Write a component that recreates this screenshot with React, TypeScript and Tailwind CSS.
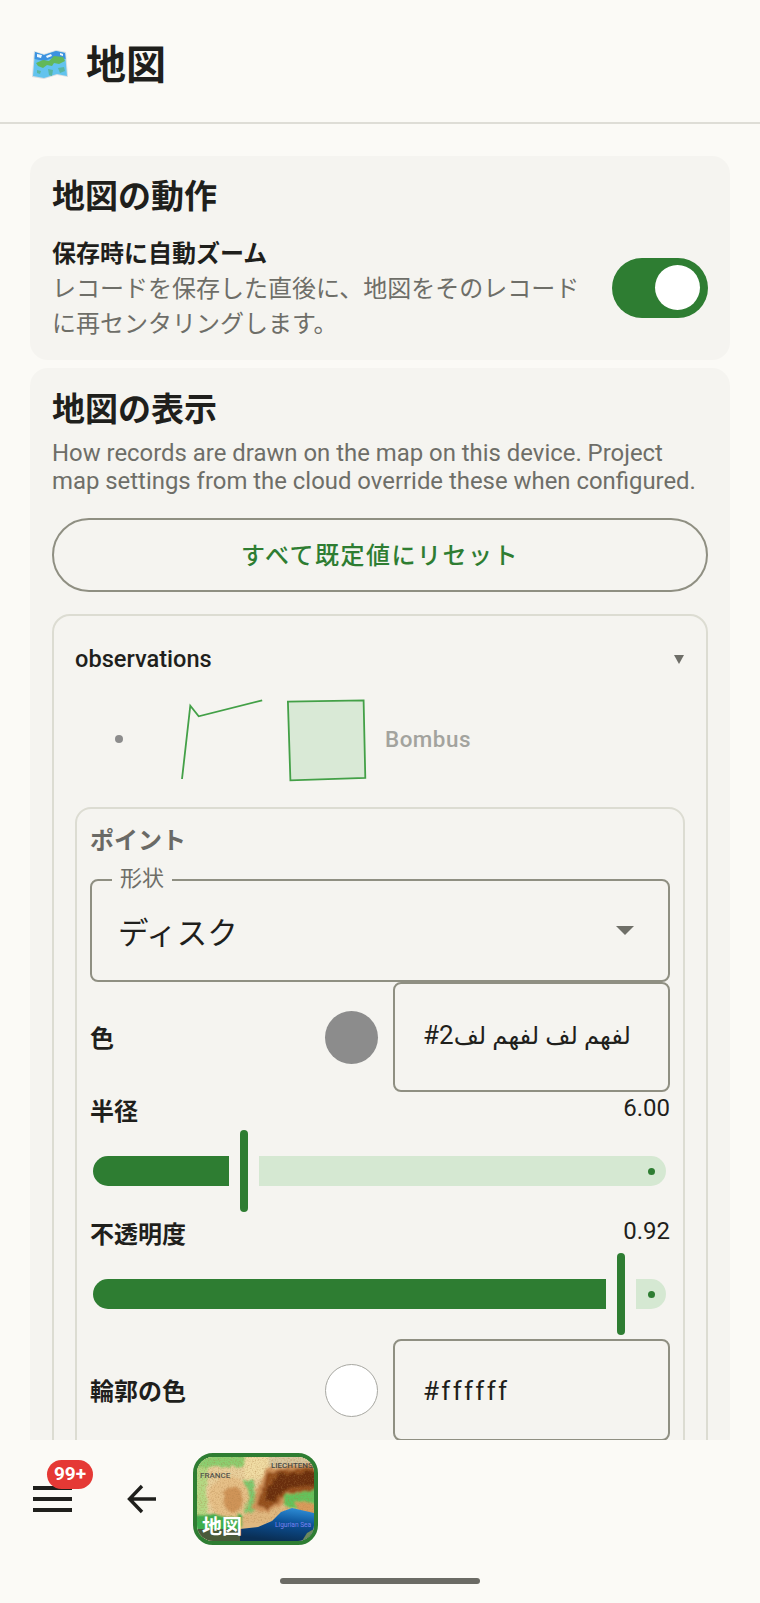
import { ReactNode } from 'react';

const fontStack = "font-['Roboto','Noto_Sans_CJK_JP',sans-serif]";

function Swatch({ color }: { color: string }) {
  return <div className={`size-[53px] shrink-0 rounded-full ${color}`} />;
}

function ColorRow({
  label,
  swatch,
  height,
  children,
}: {
  label: string;
  swatch: string;
  height: string;
  children: ReactNode;
}) {
  return (
    <div className="flex items-center">
      <span className="pt-[3px] text-[24px] leading-[34px] font-bold text-[#1f1f1c]">
        {label}
      </span>
      <div className="ml-auto mr-[15px]">
        <Swatch color={swatch} />
      </div>
      <div
        className={`flex w-[277px] items-center rounded-[8px] border-2 border-[#8f8f82] pl-[28px] text-[26px] text-[#1f1f1c] ${height}`}
      >
        {children}
      </div>
    </div>
  );
}

function SliderRow({
  label,
  value,
  activeWidth,
}: {
  label: string;
  value: string;
  activeWidth: string;
}) {
  return (
    <div>
      <div className="flex items-start justify-between">
        <span className="pt-[3px] text-[24px] leading-[34px] font-bold text-[#1f1f1c]">
          {label}
        </span>
        <span className="pt-[1px] text-[24px] leading-[30px] text-[#1f1f1c]">{value}</span>
      </div>
      <div className="mt-[1px] flex h-[82px] items-center pl-[3px] pr-[4px]">
        <div
          className={`h-[30px] shrink-0 rounded-l-full rounded-r-[3px] bg-[#2e7d32] ${activeWidth}`}
        />
        <div className="ml-[11px] h-[82px] w-[8px] shrink-0 rounded-full bg-[#2e7d32]" />
        <div className="ml-[11px] flex h-[30px] flex-1 items-center justify-end rounded-l-[3px] rounded-r-full bg-[#d5e8d2] pr-[11px]">
          <div className="size-[7px] rounded-full bg-[#2e7d32]" />
        </div>
      </div>
    </div>
  );
}

function MapEmoji() {
  return (
    <svg width="38" height="31" viewBox="0 0 38 31" className="mb-[4px] shrink-0">
      <polygon points="3,2 13,5 25,1 35,3 37,28 26,26 13,30 1,28" fill="#d5dde2" />
      <polygon points="4,3 13,6 25,2 34,4 36,27 26,25 13,29 2,27" fill="#62c3ee" />
      <polygon points="4,3 13,6 25,2 34,4 34.6,10 25,8 13,12 3.6,10" fill="#3c92e0" />
      <path d="M5 14l7-3 6 1 5-5 9 1 2 4-6 3-5-1-2 3-5-1-4 3-5-2z" fill="#62b85a" />
      <path d="M17 20l5 1-1 6-3-1zM27 19l6-1 1 4-5 2zM6 21l4 1-1 3-3-1z" fill="#58b6a0" />
      <path d="M6 5l5 1-1 3-4-1zM15 7l5-2 1 2-5 2zM29 4l3 1v2l-3-1z" fill="#eef8fd" />
    </svg>
  );
}

function TerrainMap() {
  return (
    <svg viewBox="0 0 117 84" preserveAspectRatio="none" className="size-full">
      <defs>
        <filter id="rugged" x="-10%" y="-10%" width="120%" height="120%">
          <feTurbulence type="fractalNoise" baseFrequency="0.16" numOctaves="3" seed="4" result="n" />
          <feDisplacementMap in="SourceGraphic" in2="n" scale="6" />
          <feGaussianBlur stdDeviation="1" />
        </filter>
        <filter id="grain" x="0" y="0" width="100%" height="100%">
          <feTurbulence type="fractalNoise" baseFrequency="0.7" numOctaves="2" seed="11" />
          <feColorMatrix values="0 0 0 0 0.4 0 0 0 0 0.2 0 0 0 0 0.06 0 0 0 2.2 -1" />
          <feComposite in2="SourceGraphic" operator="in" />
        </filter>
        <linearGradient id="sea" x1="0.8" y1="0" x2="0.55" y2="1">
          <stop offset="0" stopColor="#2f8fd8" />
          <stop offset="0.45" stopColor="#0c5198" />
          <stop offset="1" stopColor="#0a2f55" />
        </linearGradient>
      </defs>
      <rect width="117" height="84" fill="#e8cf9c" />
      <g filter="url(#rugged)">
        <rect x="-6" y="-6" width="60" height="16" fill="#8ccf70" />
        <rect x="-6" y="10" width="16" height="50" fill="#b4d984" />
        <rect x="-6" y="58" width="54" height="18" fill="#3eae4e" />
        <polygon points="48,-6 74,-6 74,22 48,22" fill="#f0dca4" />
        <rect x="72" y="-6" width="50" height="16" fill="#d8c8a0" />
        <polygon points="47,24 57,22 59,56 47,60" fill="#7cc96e" />
        <ellipse cx="32" cy="40" rx="20" ry="21" fill="#e6c088" />
        <ellipse cx="36" cy="42" rx="10" ry="13" fill="#cf9458" />
        <polygon points="68,12 120,5 120,36 92,40 82,51 70,57 54,52 60,30" fill="#d0925a" />
        <polygon points="72,15 120,9 120,33 90,36 80,46 70,52 60,48 65,31" fill="#94501f" />
        <polygon points="80,18 120,14 120,28 90,31 76,44 68,44 72,30" fill="#6b2f10" />
        <polygon points="88,38 120,32 120,52 86,52" fill="#62c45c" />
        <polygon points="98,45 120,46 120,60 102,56" fill="#d99c5c" />
        <polygon points="46,56 72,54 88,48 98,54 90,66 60,74 44,74" fill="#e0b880" />
      </g>
      <rect width="117" height="66" fill="#fff" filter="url(#grain)" opacity="0.45" />
      <polygon points="43,72 61,70 75,64 84,55 95,51 117,56 117,84 43,84" fill="url(#sea)" />
      <polygon points="0,72 43,72 43,84 0,84" fill="#4a5a3a" />
      <polygon points="110,76 117,72 117,84 105,84" fill="#6e8a5c" />
      <text x="3" y="21" fontSize="8" fontWeight="500" fill="#55554d" fontFamily="Roboto, sans-serif">
        FRANCE
      </text>
      <text x="74" y="11" fontSize="8" fontWeight="500" fill="#4a4a44" fontFamily="Roboto, sans-serif">
        LIECHTENS
      </text>
      <text x="78" y="70" fontSize="6.6" fill="#7a82f0" fontFamily="Roboto, sans-serif">
        Ligurian Sea
      </text>
    </svg>
  );
}

export default function App() {
  return (
    <div
      className={`flex h-[1603px] w-[760px] flex-col overflow-hidden bg-[#fbfaf6] ${fontStack}`}
    >
      <header className="flex h-[124px] shrink-0 items-center gap-[17px] border-b-2 border-[#deddd6] pl-[31px] pt-[10px]">
        <MapEmoji />
        <h1 className="text-[40px] leading-[48px] font-bold text-[#1f1f1c]">地図</h1>
      </header>

      <main className="min-h-0 flex-1 overflow-hidden px-[30px] pt-[32px]">
        <section className="rounded-[18px] bg-[#f5f4f0] px-[22px] pb-[18px] pt-[21px]">
          <h2 className="text-[33px] leading-[40px] font-bold text-[#1f1f1c]">地図の動作</h2>
          <div className="mt-[20px] flex items-center justify-between">
            <div className="w-[540px]">
              <div className="text-[24px] leading-[34px] font-bold text-[#1f1f1c]">
                保存時に自動ズーム
              </div>
              <p className="mt-[1px] text-[24px] leading-[35px] text-[#6e6e68]">
                レコードを保存した直後に、地図をそのレコードに再センタリングします。
              </p>
            </div>
            <div className="mb-[4px] flex h-[60px] w-[96px] items-center justify-end rounded-full bg-[#2e7d32] pr-[8px]">
              <div className="size-[45px] rounded-full bg-white" />
            </div>
          </div>
        </section>

        <section className="mt-[8px] rounded-[18px] bg-[#f5f4f0] px-[22px] pb-[40px] pt-[22px]">
          <h2 className="text-[33px] leading-[40px] font-bold text-[#1f1f1c]">地図の表示</h2>
          <p className="mt-[9px] text-[23.9px] leading-[28px] text-[#6e6e68]">
            How records are drawn on the map on this device. Project map settings from the cloud
            override these when configured.
          </p>
          <button className="mt-[23px] h-[74px] w-full rounded-full border-2 border-[#8f8f82] pt-[2px] text-[24px] font-medium tracking-[1.5px] text-[#2e7d32]">
            すべて既定値にリセット
          </button>

          <div className="mt-[22px] rounded-[18px] border-2 border-[#dcdcd2] px-[21px] pb-[20px] pt-[28px]">
            <div className="flex items-center justify-between">
              <span className="text-[23.6px] leading-[30px] font-medium text-[#1f1f1c]">
                observations
              </span>
              <span className="mr-[1px] h-0 w-0 border-x-[5px] border-t-[9px] border-x-transparent border-t-[#6e6e68]" />
            </div>

            <div className="mt-[24px] flex items-center gap-[10px]">
              <svg width="300" height="84" viewBox="0 0 300 84">
                <circle cx="44" cy="41" r="4" fill="#8c8c8c" />
                <polyline
                  points="107,81 115.3,7.7 123.7,18.3 187.2,2.3"
                  fill="none"
                  stroke="#43a047"
                  strokeWidth="1.8"
                />
                <polygon
                  points="212.9,3.7 288.6,2.3 290.3,80 215.4,82.3"
                  fill="#d9e9d6"
                  stroke="#43a047"
                  strokeWidth="1.8"
                />
              </svg>
              <span className="text-[22.4px] font-medium tracking-[0.5px] text-[#a3a39e]">
                Bombus
              </span>
            </div>

            <div className="mt-[25px] rounded-[16px] border-2 border-[#dcdcd2] px-[13px] pb-[20px] pt-[17px]">
              <div className="text-[24px] leading-[30px] font-bold text-[#6a6a66]">ポイント</div>

              <div className="relative mt-[23px] flex h-[103px] items-center justify-between rounded-[8px] border-2 border-[#8f8f82] pl-[26px] pr-[34px] pt-[6px]">
                <span className="absolute -top-[16px] left-[20px] bg-[#f5f4f0] px-[8px] text-[22px] leading-[28px] text-[#6e6e68]">
                  形状
                </span>
                <span className="text-[30.5px] text-[#1f1f1c]">ディスク</span>
                <span className="mb-[6px] h-0 w-0 border-x-[9px] border-t-[9px] border-x-transparent border-t-[#6f6f68]" />
              </div>

              <ColorRow label="色" swatch="bg-[#8c8c8c]" height="h-[110px]">
                <span className="mb-[4px] font-['Roboto','DejaVu_Sans',sans-serif]">
                  <span>#2</span>
                  <span className="text-[24.3px]">لفهم لف لفهم لف</span>
                </span>
              </ColorRow>

              <SliderRow label="半径" value="6.00" activeWidth="w-[136px]" />
              <div className="mt-[3px]">
                <SliderRow label="不透明度" value="0.92" activeWidth="w-[513px]" />
              </div>

              <div className="mt-[4px]">
                <ColorRow
                  label="輪郭の色"
                  swatch="border border-[#a8a8a2] bg-white"
                  height="h-[102px]"
                >
                  <span className="mt-[2px] tracking-[2.3px]">#ffffff</span>
                </ColorRow>
              </div>
            </div>
          </div>
        </section>
      </main>

      <footer className="flex h-[163px] shrink-0 flex-col">
        <div className="flex items-center pl-[33px] pt-[13px]">
          <div className="relative flex w-[39px] flex-col gap-[7px]">
            <div className="h-[4px] bg-[#1f1f1c]" />
            <div className="h-[4px] bg-[#1f1f1c]" />
            <div className="h-[4px] bg-[#1f1f1c]" />
            <span className="absolute -top-[26px] left-[14px] flex h-[29px] w-[46px] items-center justify-center rounded-full bg-[#e53935] text-[19px] font-bold text-white">
              99+
            </span>
          </div>
          <svg width="30" height="30" viewBox="0 0 30 30" className="ml-[55px]">
            <path
              d="M29 15H3M15 2 2.5 15 15 28"
              fill="none"
              stroke="#1f1f1c"
              strokeWidth="3.4"
            />
          </svg>
          <div className="relative ml-[36px] h-[92px] w-[125px] overflow-hidden rounded-[20px] border-4 border-[#2e7d32]">
            <TerrainMap />
            <span className="absolute bottom-[2px] left-[5px] text-[20px] leading-[24px] font-bold text-white">
              地図
            </span>
          </div>
        </div>
        <div className="mx-auto mt-[33px] h-[6px] w-[200px] rounded-full bg-[#6b6b65]" />
      </footer>
    </div>
  );
}
